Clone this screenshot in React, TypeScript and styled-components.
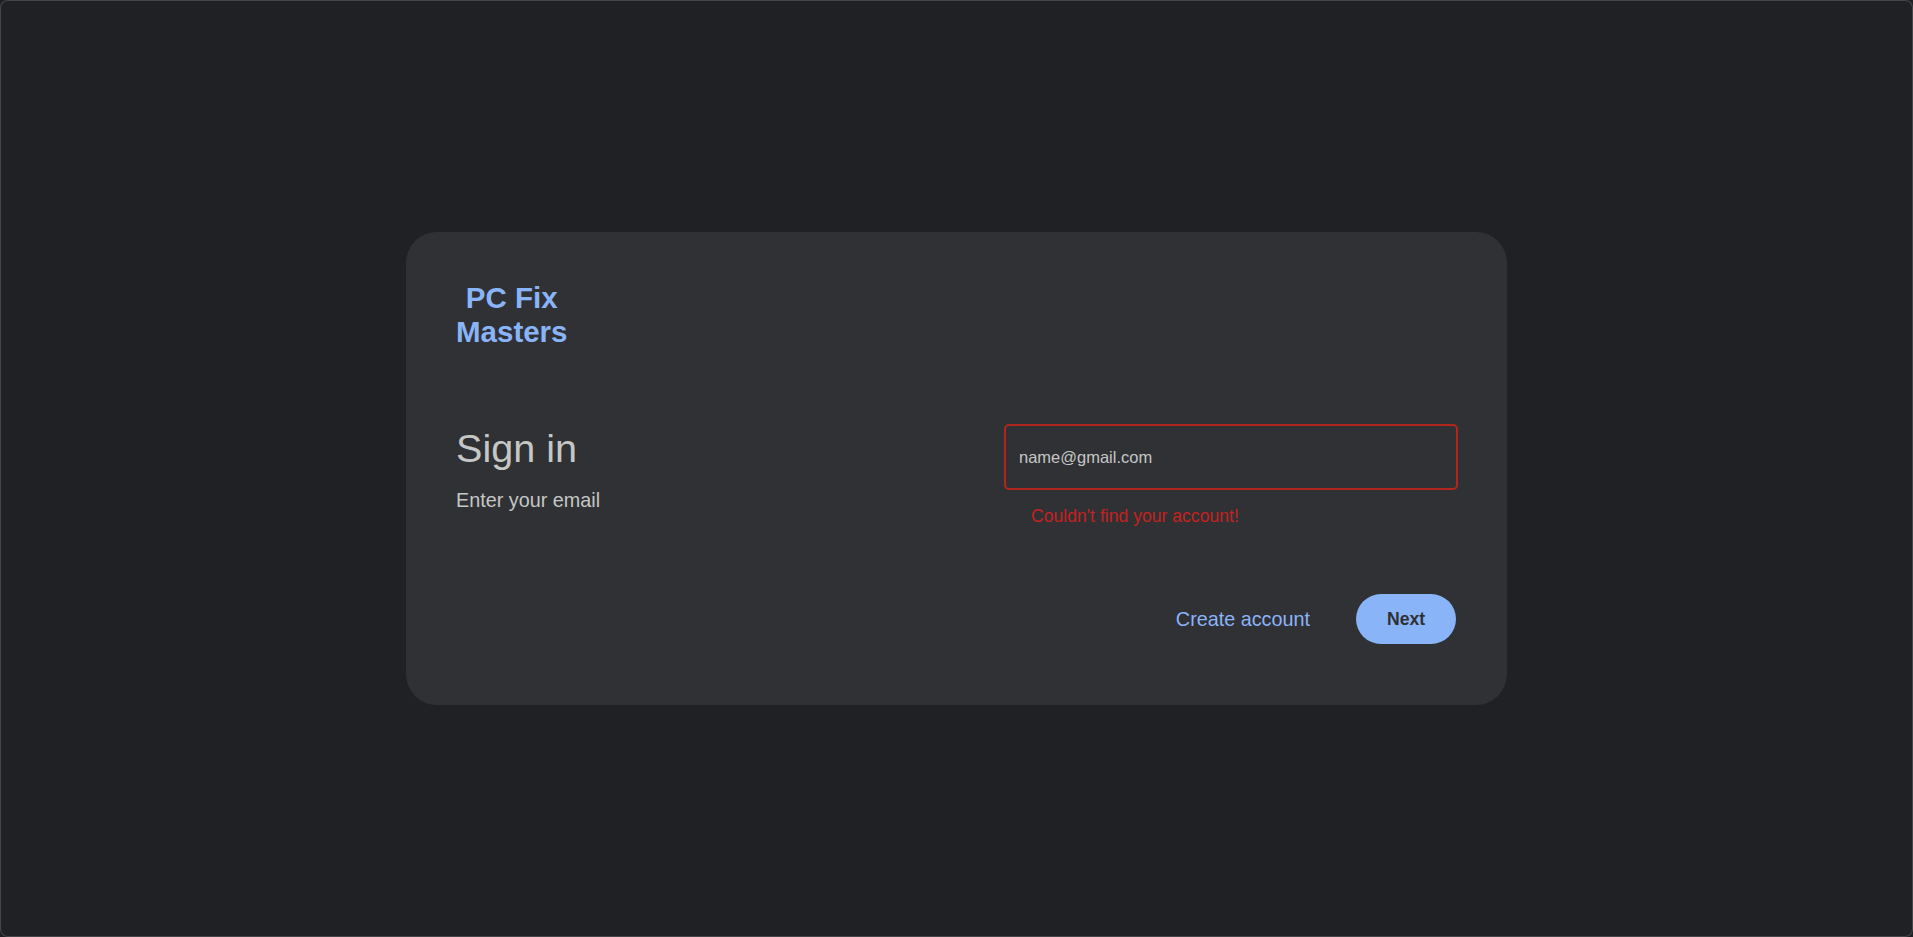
import React from "react";
import styled, { createGlobalStyle } from "styled-components";

const GlobalStyle = createGlobalStyle`
  *, *::before, *::after { box-sizing: border-box; }
  html, body { margin: 0; padding: 0; background: #202124; }
  body { font-family: "Liberation Sans", Arial, sans-serif; }
`;

const Page = styled.div`
  min-height: 100vh;
  display: flex;
  align-items: center;
  justify-content: center;
  background: #202124;
  box-shadow: inset 0 0 0 1px #45464a;
  border-radius: 8px;
`;

const Card = styled.main`
  width: 1101px;
  padding: 49px 49px 61px 50px;
  background: #303134;
  border-radius: 31px;
  display: flex;
  flex-direction: column;
`;

const Logo = styled.div`
  align-self: flex-start;
  text-align: center;
  font-size: 29.5px;
  line-height: 33.5px;
  font-weight: 700;
  color: #8ab4f8;
`;

const Body = styled.section`
  margin-top: 77px;
  display: grid;
  grid-template-columns: 548px 1fr;
  align-items: start;
`;

const Intro = styled.div`
  display: flex;
  flex-direction: column;
`;

const Title = styled.h1`
  margin: 0;
  font-size: 39.6px;
  line-height: 46px;
  font-weight: 400;
  color: #c4c7c5;
`;

const Subtitle = styled.p`
  margin: 18px 0 0;
  font-size: 19.8px;
  line-height: 23px;
  color: #c4c7c5;
`;

const Field = styled.div`
  display: flex;
  flex-direction: column;
  margin-top: -1px;
`;

const Input = styled.input<{ $invalid?: boolean }>`
  height: 66px;
  width: 100%;
  padding: 0 13px;
  background: transparent;
  border: 2px solid ${(p) => (p.$invalid ? "#b3261e" : "#8e918f")};
  border-radius: 5px;
  font-family: "Liberation Sans", Arial, sans-serif;
  font-size: 16.5px;
  color: #c4c7c5;
  outline: none;
`;

const ErrorText = styled.div`
  margin-top: 16px;
  padding-left: 27px;
  font-size: 17.6px;
  line-height: 20px;
  color: #c5221f;
`;

const Actions = styled.div`
  margin-top: 68px;
  padding-right: 2px;
  display: flex;
  justify-content: flex-end;
  align-items: center;
  gap: 22px;
`;

const TextButton = styled.button`
  height: 50px;
  padding: 0 24px;
  background: transparent;
  border: none;
  border-radius: 25px;
  font-family: "Liberation Sans", Arial, sans-serif;
  font-size: 19.8px;
  color: #8ab4f8;
  cursor: pointer;
`;

const PrimaryButton = styled.button`
  width: 100px;
  height: 50px;
  background: #8ab4f8;
  border: none;
  border-radius: 25px;
  font-family: "Liberation Sans", Arial, sans-serif;
  font-size: 17.6px;
  font-weight: 700;
  color: #303134;
  cursor: pointer;
`;

export default function App() {
  return (
    <>
      <GlobalStyle />
      <Page>
        <Card>
          <Logo>
            PC Fix
            <br />
            Masters
          </Logo>
          <Body>
            <Intro>
              <Title>Sign in</Title>
              <Subtitle>Enter your email</Subtitle>
            </Intro>
            <Field>
              <Input $invalid defaultValue="name@gmail.com" aria-label="Email" />
              <ErrorText>Couldn't find your account!</ErrorText>
            </Field>
          </Body>
          <Actions>
            <TextButton>Create account</TextButton>
            <PrimaryButton>Next</PrimaryButton>
          </Actions>
        </Card>
      </Page>
    </>
  );
}
